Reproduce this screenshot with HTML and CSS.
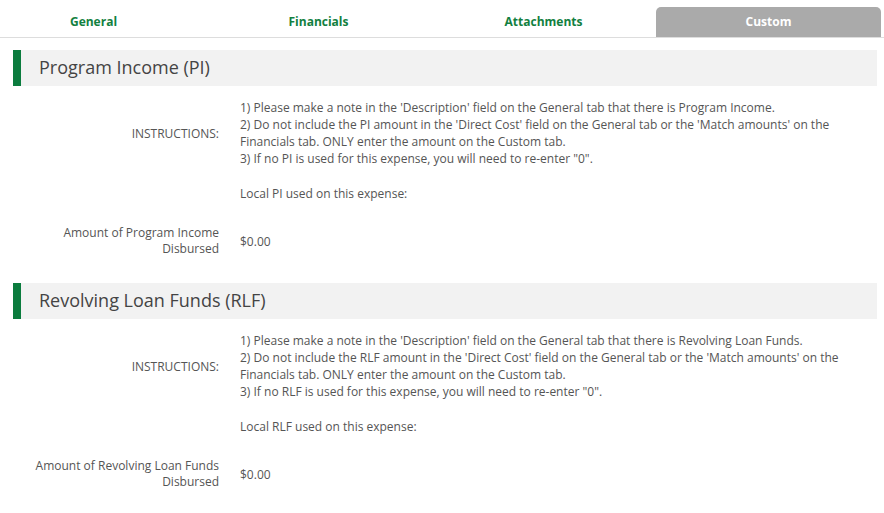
FILE: index.html
```html
<!DOCTYPE html>
<html lang="en">
<head>
  <meta charset="UTF-8">
  <title>Expense - Custom</title>
  <link rel="stylesheet" href="styles.css">
</head>
<body>
  <div class="tabs">
    <div class="tab">General</div>
    <div class="tab">Financials</div>
    <div class="tab">Attachments</div>
    <div class="tab active">Custom</div>
  </div>

  <div class="content">
    <div class="section-head">Program Income (PI)</div>
    <div class="form-row instructions">
      <div class="label">INSTRUCTIONS:</div>
      <div class="value">
        1) Please make a note in the 'Description' field on the General tab that there is Program Income.<br>
        2) Do not include the PI amount in the 'Direct Cost' field on the General tab or the 'Match amounts' on the Financials tab. ONLY enter the amount on the Custom tab.<br>
        3) If no PI is used for this expense, you will need to re-enter "0".
      </div>
    </div>
    <div class="form-row local">
      <div class="label"></div>
      <div class="value">Local PI used on this expense:</div>
    </div>
    <div class="form-row amount">
      <div class="label">Amount of Program Income Disbursed</div>
      <div class="value">$0.00</div>
    </div>

    <div class="section-head">Revolving Loan Funds (RLF)</div>
    <div class="form-row instructions">
      <div class="label">INSTRUCTIONS:</div>
      <div class="value">
        1) Please make a note in the 'Description' field on the General tab that there is Revolving Loan Funds.<br>
        2) Do not include the RLF amount in the 'Direct Cost' field on the General tab or the 'Match amounts' on the Financials tab. ONLY enter the amount on the Custom tab.<br>
        3) If no RLF is used for this expense, you will need to re-enter "0".
      </div>
    </div>
    <div class="form-row local">
      <div class="label"></div>
      <div class="value">Local RLF used on this expense:</div>
    </div>
    <div class="form-row amount">
      <div class="label">Amount of Revolving Loan Funds Disbursed</div>
      <div class="value">$0.00</div>
    </div>
  </div>
</body>
</html>
```

FILE: styles.css
```css
body {
  margin: 0;
  font-family: "Open Sans", Arial, sans-serif;
  font-size: 12px;
  color: #555;
  background: #fff;
  overflow: hidden;
}
.tabs {
  display: flex;
  height: 37px;
  border-bottom: 1px solid #ddd;
  margin-left: -19px;
  align-items: flex-end;
}
.tab {
  width: 225px;
  height: 30px;
  line-height: 29px;
  text-align: center;
  font-weight: bold;
  font-size: 12px;
  color: #12803f;
}
.tab.active {
  background: #aaa;
  color: #fff;
  border-radius: 5px 5px 0 0;
}
.content {
  padding: 12px 7px 0 13px;
}
.section-head {
  height: 36px;
  line-height: 35px;
  background: #f2f2f2;
  border-left: 8px solid #0b7c3e;
  padding-left: 18px;
  font-size: 18px;
  color: #444;
  margin-bottom: 13px;
}
.form-row {
  display: flex;
  align-items: center;
  line-height: 17px;
}
.form-row .label {
  flex-shrink: 0;
  width: 227px;
  padding: 0 21px 0 20px;
  box-sizing: border-box;
  text-align: right;
}
.form-row .value {
  flex: 1;
  padding-right: 30px;
}
.local {
  margin-top: 18px;
}
.amount {
  margin-top: 23px;
  margin-bottom: 26px;
}
.amount .label {
  line-height: 16px;
}
```
